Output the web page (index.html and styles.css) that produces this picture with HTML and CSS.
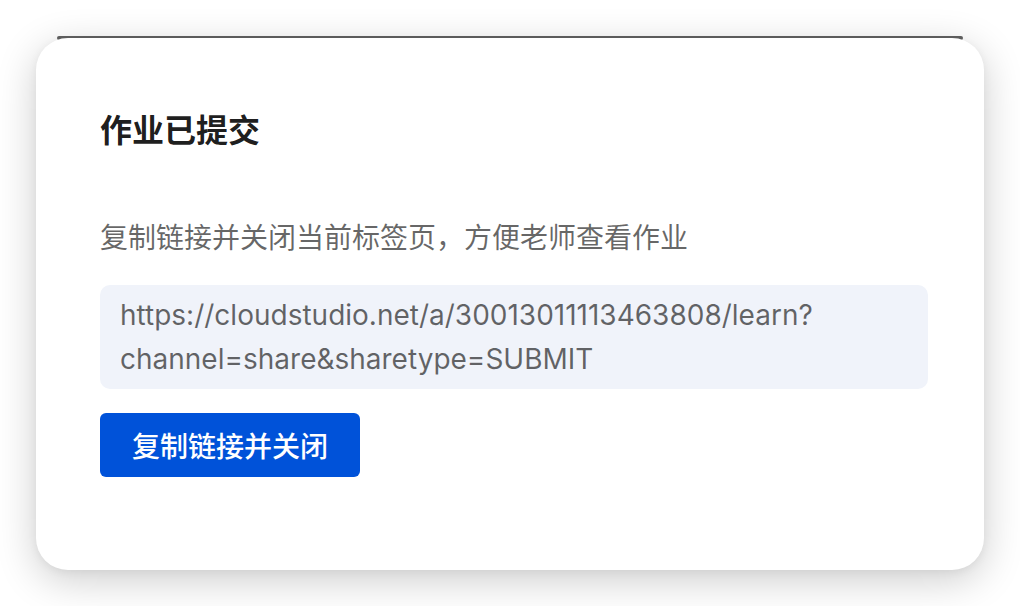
FILE: index.html
```html
<!DOCTYPE html>
<html lang="zh-CN">
<head>
<meta charset="utf-8">
<title>作业已提交</title>
<link rel="stylesheet" href="styles.css">
</head>
<body>
<div class="stage">
  <div class="dialog">
    <h1 class="dialog-title">作业已提交</h1>
    <p class="dialog-desc">复制链接并关闭当前标签页，方便老师查看作业</p>
    <div class="link-box">https://cloudstudio.net/a/30013011113463808/learn?<br>channel=share&amp;sharetype=SUBMIT</div>
    <button class="btn-primary" type="button">复制链接并关闭</button>
  </div>
</div>
</body>
</html>
```
FILE: styles.css
```css
html {
  background: #ffffff;
}
html, body {
  margin: 0;
  padding: 0;
}
body {
  font-family: Inter, "Noto Sans CJK SC", sans-serif;
  -webkit-font-smoothing: antialiased;
}
.stage {
  width: 1020px;
  height: 606px;
  box-sizing: border-box;
  padding: 38px 36px 0 36px;
  overflow: hidden;
}
.dialog {
  position: relative;
  width: 948px;
  height: 532px;
  box-sizing: border-box;
  padding: 66px 56px 0 64px;
  background: #ffffff;
  border-radius: 32px;
  box-shadow: 0 10px 40px rgba(0, 0, 0, 0.2), 0 2px 10px rgba(0, 0, 0, 0.05);
}
.dialog::before {
  content: "";
  position: absolute;
  z-index: -1;
  top: -2px;
  left: 21px;
  right: 21px;
  height: 4px;
  background: #636363;
  border-radius: 2px;
}
.dialog-title {
  margin: 0;
  font-family: "Noto Sans CJK SC", sans-serif;
  font-size: 32px;
  line-height: 48px;
  font-weight: 700;
  color: rgba(0, 0, 0, 0.9);
}
.dialog-desc {
  margin: 60px 0 0 0;
  font-family: "Noto Sans CJK SC", sans-serif;
  font-size: 28px;
  line-height: 48px;
  color: rgba(0, 0, 0, 0.6);
}
.link-box {
  margin-top: 25px;
  padding: 8px 20px;
  background: #f0f3fa;
  border-radius: 10px;
  font-family: Inter, "Noto Sans CJK SC", sans-serif;
  font-size: 28px;
  line-height: 44px;
  color: rgba(0, 0, 0, 0.6);
  word-break: break-all;
}
.btn-primary {
  display: block;
  margin-top: 24px;
  height: 64px;
  padding: 0 32px;
  border: none;
  border-radius: 6px;
  background: #0052d9;
  color: #ffffff;
  font-family: "Noto Sans CJK SC", sans-serif;
  font-size: 28px;
  font-weight: 500;
  line-height: 64px;
}
```
